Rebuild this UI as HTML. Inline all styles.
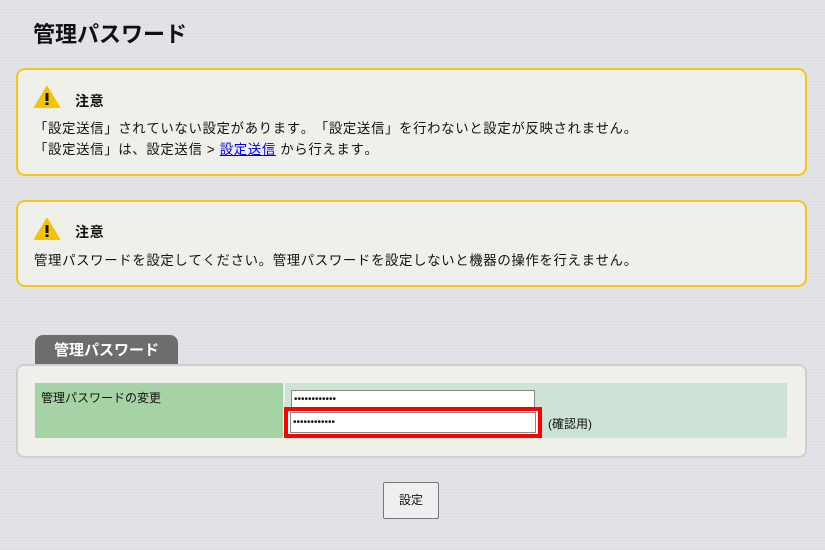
<!DOCTYPE html>
<html><head><meta charset="utf-8"><style>
body{margin:0;width:825px;height:550px;overflow:hidden;font-family:"Liberation Sans","Noto Sans CJK JP",sans-serif;color:#111;font-kerning:none;text-spacing-trim:space-all;
background:repeating-linear-gradient(180deg,#e4e6ea 0px,#d8dadf 1px,#e9eaee 2px,#dcdee2 3px);}
.abs{position:absolute;white-space:nowrap}
h1{position:absolute;left:33px;top:17px;margin:0;font-size:22px;font-weight:bold}
.box{position:absolute;left:16px;width:787px;border:2px solid #f5c518;border-radius:9px;background:#f0f0ea;font-size:13.4px;letter-spacing:0.65px}
.ttl{position:absolute;left:57px;font-weight:bold;font-size:14px}
.ic{position:absolute;left:16px}
a{color:#00e;text-decoration:underline}
</style></head><body>
<h1>管理パスワード</h1>
<div class="box" style="top:68px;height:104px">
 <svg class="ic" style="top:16px" width="26" height="22" viewBox="0 0 26 22"><path d="M13 1 L25 21 L1 21 Z" fill="#f5c400" stroke="#f5c400" stroke-linejoin="round" stroke-width="2"/><rect x="11.5" y="7" width="3" height="8" fill="#111"/><rect x="11.5" y="16.5" width="3" height="2.5" fill="#111"/></svg>
 <div class="ttl" style="top:21px">注意</div>
 <div class="abs" style="left:16px;top:47px">「設定送信」されていない設定があります。「設定送信」を行わないと設定が反映されません。</div>
 <div class="abs" style="left:16px;top:68px">「設定送信」は、設定送信 &gt; <a>設定送信</a> から行えます。</div>
</div>
<div class="box" style="top:200px;height:83px">
 <svg class="ic" style="top:16px" width="26" height="22" viewBox="0 0 26 22"><path d="M13 1 L25 21 L1 21 Z" fill="#f5c400" stroke="#f5c400" stroke-linejoin="round" stroke-width="2"/><rect x="11.5" y="7" width="3" height="8" fill="#111"/><rect x="11.5" y="16.5" width="3" height="2.5" fill="#111"/></svg>
 <div class="ttl" style="top:20px">注意</div>
 <div class="abs" style="left:16px;top:47px">管理パスワードを設定してください。管理パスワードを設定しないと機器の操作を行えません。</div>
</div>
<div class="abs" style="left:35px;top:335px;width:143px;height:30px;background:#6d6d6d;border-radius:8px 8px 0 0;color:#fff;font-weight:bold;font-size:15px;line-height:32px;text-align:center">管理パスワード</div>
<div class="abs" style="left:16px;top:364px;width:787px;height:90px;background:#f0f0ea;border:2px solid #cfcfcf;border-radius:8px"></div>
<div class="abs" style="left:35px;top:383px;width:248px;height:55px;background:#a6d3a5;font-size:12px"><div style="padding:6px 0 0 6px">管理パスワードの変更</div></div>
<div class="abs" style="left:285px;top:383px;width:502px;height:55px;background:#cde3d5"></div>
<div class="abs" style="left:291px;top:390px;width:244px;height:19px;background:#fff;border:1px solid #888;font-size:10px;line-height:18px;padding-left:2px;box-sizing:border-box">••••••••••••</div>
<div class="abs" style="left:284px;top:407px;width:250px;height:23px;border:4px solid #f00;background:#fff"></div>
<div class="abs" style="left:290px;top:412px;width:246px;height:21px;background:#fff;border:1px solid #888;font-size:10px;line-height:19px;padding-left:2px;box-sizing:border-box">••••••••••••</div>
<div class="abs" style="left:548px;top:415px;font-size:12px">(確認用)</div>
<div class="abs" style="left:383px;top:482px;width:56px;height:37px;background:#efefef;border:1px solid #777;border-radius:2px;box-sizing:border-box;font-size:12px;line-height:35px;text-align:center">設定</div>
</body></html>
